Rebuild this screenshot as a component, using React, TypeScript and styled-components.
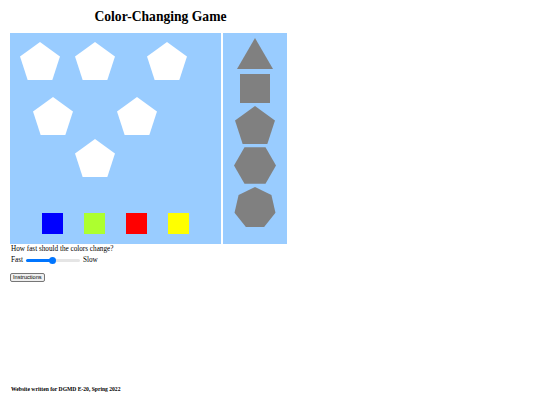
import React, { useState } from 'react';
import styled, { createGlobalStyle } from 'styled-components';

const GlobalStyle = createGlobalStyle`
  html, body {
    margin: 0;
    padding: 0;
    background: #ffffff;
  }
  body {
    font-family: "Liberation Serif", "Times New Roman", serif;
    font-size: 7.2px;
    color: #000000;
  }
`;

const Page = styled.div`
  box-sizing: border-box;
  min-height: 100vh;
  padding: 0 10px 12px;
  display: flex;
  flex-direction: column;
  align-items: flex-start;
`;

const Title = styled.h1`
  width: 301px;
  margin: 0;
  padding-top: 8px;
  text-align: center;
  font-size: 13.6px;
  line-height: 17px;
  font-weight: bold;
`;

const Board = styled.div`
  margin-top: 8px;
  display: flex;
  gap: 2px;
  background: #ffffff;
`;

const PlayArea = styled.div`
  position: relative;
  width: 211px;
  height: 211px;
  background: #99ccff;
  display: flex;
  flex-direction: column;
  justify-content: flex-end;
  align-items: center;
  padding-bottom: 10px;
  box-sizing: border-box;
`;

const Piece = styled.svg<{ $x: number; $y: number }>`
  position: absolute;
  left: ${(p) => p.$x}px;
  top: ${(p) => p.$y}px;
`;

const Swatches = styled.div`
  display: flex;
  gap: 21px;
`;

const Swatch = styled.div<{ $color: string }>`
  width: 21px;
  height: 21px;
  background: ${(p) => p.$color};
`;

const Palette = styled.div`
  width: 64px;
  height: 211px;
  background: #99ccff;
  display: flex;
  flex-direction: column;
  align-items: center;
  gap: 3px;
  padding-top: 5px;
  box-sizing: border-box;
`;

const Prompt = styled.div`
  margin-top: 1px;
  padding-left: 1px;
  line-height: 8px;
`;

const SpeedRow = styled.label`
  display: flex;
  align-items: center;
  gap: 3px;
  margin-top: 3px;
  padding-left: 1px;
  line-height: 8px;
`;

const Slider = styled.input`
  -webkit-appearance: none;
  appearance: none;
  width: 54px;
  height: 3px;
  margin: 0;
  border-radius: 2px;
  outline: none;

  &::-webkit-slider-thumb {
    -webkit-appearance: none;
    width: 7px;
    height: 7px;
    border-radius: 50%;
    background: #0075ff;
    border: none;
  }
`;

const InfoButton = styled.button`
  margin-top: 9px;
  height: 9px;
  padding: 0 2px;
  font-family: "Liberation Sans", Arial, sans-serif;
  font-size: 5.6px;
  line-height: 7px;
  color: #000000;
  background: #efefef;
  border: 1px solid #767676;
  border-radius: 2px;
`;

const Footer = styled.h5`
  margin: auto 0 0;
  padding-left: 1px;
  font-size: 5.6px;
  line-height: 8px;
  font-weight: bold;
`;

function polygon(sides: number, r: number, cx: number, cy: number, rot: number) {
  const pts: string[] = [];
  for (let i = 0; i < sides; i++) {
    const a = rot + (i * 2 * Math.PI) / sides;
    pts.push(`${(cx + r * Math.cos(a)).toFixed(2)},${(cy + r * Math.sin(a)).toFixed(2)}`);
  }
  return pts.join(' ');
}

const UP = -Math.PI / 2;

const pentagons = [
  { x: 10, y: 9 },
  { x: 65, y: 9 },
  { x: 137, y: 9 },
  { x: 23, y: 64 },
  { x: 107, y: 64 },
  { x: 65, y: 106 },
];

const colors = ['#0000ff', '#adff2f', '#ff0000', '#ffff00'];

const GRAY = '#808080';

export default function App() {
  const [speed, setSpeed] = useState(50);

  return (
    <>
      <GlobalStyle />
      <Page>
        <Title>Color-Changing Game</Title>
        <Board>
          <PlayArea>
            {pentagons.map((p, i) => (
              <Piece key={i} $x={p.x} $y={p.y} width="40" height="38" viewBox="0 0 40 38">
                <polygon points={polygon(5, 21, 20, 21, UP)} fill="#ffffff" />
              </Piece>
            ))}
            <Swatches>
              {colors.map((c) => (
                <Swatch key={c} $color={c} />
              ))}
            </Swatches>
          </PlayArea>
          <Palette>
            <svg width="36" height="31" viewBox="0 0 36 31">
              <polygon points="18,0 36,31 0,31" fill={GRAY} />
            </svg>
            <svg width="30" height="29" viewBox="0 0 30 29" style={{ marginTop: 2 }}>
              <rect width="30" height="29" fill={GRAY} />
            </svg>
            <svg width="40" height="38" viewBox="0 0 40 38">
              <polygon points={polygon(5, 21, 20, 21, UP)} fill={GRAY} />
            </svg>
            <svg width="42" height="37" viewBox="0 0 42 37">
              <polygon points={polygon(6, 21, 21, 18.5, 0)} fill={GRAY} />
            </svg>
            <svg width="42" height="40" viewBox="0 0 42 40">
              <polygon points={polygon(7, 21, 21, 21, UP)} fill={GRAY} />
            </svg>
          </Palette>
        </Board>
        <Prompt>How fast should the colors change?</Prompt>
        <SpeedRow>
          Fast
          <Slider
            type="range"
            min={0}
            max={100}
            value={speed}
            onChange={(e) => setSpeed(Number(e.target.value))}
            style={{
              background: `linear-gradient(to right, #0075ff 0%, #0075ff ${speed}%, #e5e5e5 ${speed}%, #e5e5e5 100%)`,
            }}
          />
          Slow
        </SpeedRow>
        <InfoButton>Instructions</InfoButton>
        <Footer>Website written for DGMD E-20, Spring 2022</Footer>
      </Page>
    </>
  );
}
